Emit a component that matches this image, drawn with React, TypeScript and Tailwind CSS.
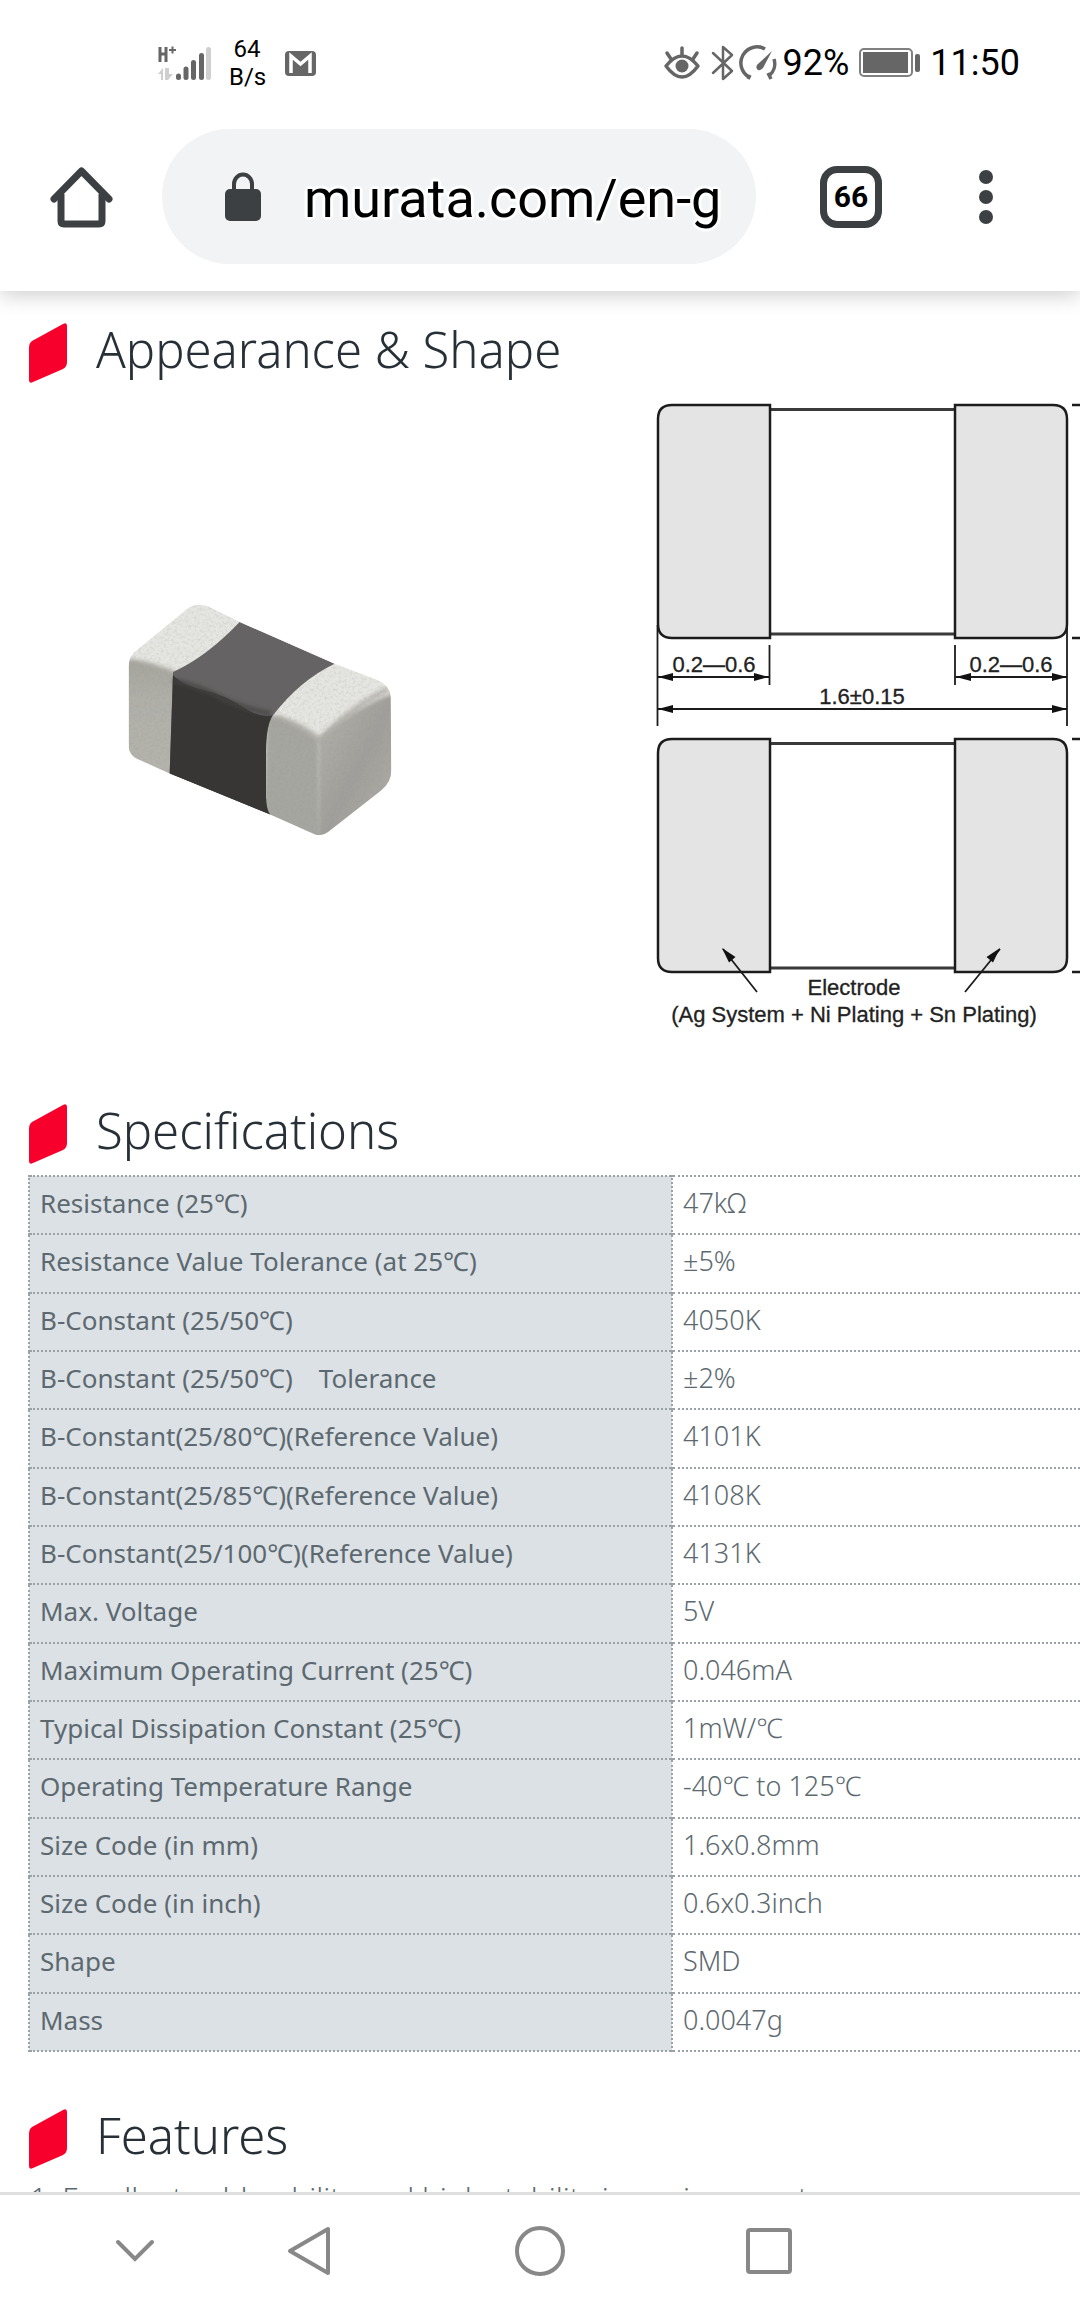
import type { ReactNode } from 'react';

interface Spec {
  label: string;
  value: string;
}

const specs: Spec[] = [
  { label: 'Resistance (25℃)', value: '47kΩ' },
  { label: 'Resistance Value Tolerance (at 25℃)', value: '±5%' },
  { label: 'B-Constant (25/50℃)', value: '4050K' },
  { label: 'B-Constant (25/50℃)　Tolerance', value: '±2%' },
  { label: 'B-Constant(25/80℃)(Reference Value)', value: '4101K' },
  { label: 'B-Constant(25/85℃)(Reference Value)', value: '4108K' },
  { label: 'B-Constant(25/100℃)(Reference Value)', value: '4131K' },
  { label: 'Max. Voltage', value: '5V' },
  { label: 'Maximum Operating Current (25℃)', value: '0.046mA' },
  { label: 'Typical Dissipation Constant (25℃)', value: '1mW/℃' },
  { label: 'Operating Temperature Range', value: '-40℃ to 125℃' },
  { label: 'Size Code (in mm)', value: '1.6x0.8mm' },
  { label: 'Size Code (in inch)', value: '0.6x0.3inch' },
  { label: 'Shape', value: 'SMD' },
  { label: 'Mass', value: '0.0047g' },
];

function StatusBar() {
  return (
    <div className="flex h-[129px] items-center justify-between pb-[3px] pl-[157px] pr-15 font-['Roboto',sans-serif] text-black">
      <div className="flex items-center">
        <svg width="56" height="36" viewBox="0 0 56 36">
          {/* H+ network type */}
          <path d="M3 2v15M9 2v15M3 9h6" stroke="#666" strokeWidth="3" fill="none" />
          <path d="M12 5h7M15.500 1.500v7" stroke="#666" strokeWidth="2" />
          {/* Data arrows */}
          <path d="M6 35V23L1 29h3v6zM8 23v12h3l5-6h-4v-6z" fill="#cfcfcf" />
          {/* Signal bars */}
          <g strokeWidth="5" strokeLinecap="round" stroke="#666">
            <path d="M21.500 31v1.500M29 24v8.500M36.500 17.500v15M44.500 10.500v22" />
            <path d="M51.500 4.500v28" stroke="#cfcfcf" />
          </g>
        </svg>
        <div className="ml-4 w-9 text-center text-2xl leading-7">
          64
          <br />
          B/s
        </div>
        <svg className="ml-5" width="31" height="25" viewBox="0 0 31 25">
          <rect width="31" height="25" rx="4" fill="#666" />
          <path d="M6 22V5l9.500 8L25 5v17" fill="none" stroke="#fff" strokeWidth="3.500" />
        </svg>
      </div>
      <div className="flex items-center text-4xl">
        {/* Eye comfort */}
        <svg width="38" height="36" viewBox="0 0 38 36" fill="none" stroke="#666" strokeWidth="3.500" strokeLinecap="round">
          <path d="M3 21Q11 11 19 11T35 21Q27 32 19 32T3 21Z" strokeLinejoin="round" />
          <circle cx="19" cy="21" r="6.500" fill="#666" stroke="none" />
          <path d="M19 3v7M4 8l4 6M34 8l-4 6" />
        </svg>
        {/* Bluetooth */}
        <svg className="ml-2" width="26" height="36" viewBox="0 0 26 36" fill="none" stroke="#666" strokeWidth="2.500" strokeLinecap="round" strokeLinejoin="round">
          <path d="M4 8l19 18-9 8V2l9 8L4 28" />
        </svg>
        {/* Data saver gauge */}
        <svg className="ml-1" width="40" height="36" viewBox="0 0 40 36" fill="none" stroke="#666" strokeWidth="3.500">
          <path d="M11 30l-2 4M10 32A16 16 0 0 1 26 4M35 14A16 16 0 0 1 30 31M29 28l3 6" />
          <path d="M33 6L24 23q-4 4-6 1t2-6z" fill="#666" stroke="none" />
        </svg>
        <span className="ml-1">92%</span>
        <svg className="mx-[10px]" width="61" height="30" viewBox="0 0 61 30">
          <rect x="1" y="1" width="52" height="27" rx="4" fill="none" stroke="#808080" strokeWidth="2" />
          <rect x="4" y="4" width="45" height="21" fill="#666" />
          <rect x="56" y="6" width="5" height="18" rx="2" fill="#666" />
        </svg>
        <span>11:50</span>
      </div>
    </div>
  );
}

function Toolbar() {
  return (
    <div className="flex items-center pb-[27px] pl-[49px] pr-[86px] text-[#3c4043]">
      <button type="button" aria-label="Home">
        <svg width="64" height="64" viewBox="0 0 64 64" fill="none" stroke="currentColor">
          <path d="M5 34L32.500 6 60 34" strokeWidth="7" strokeLinecap="round" strokeLinejoin="round" />
          <path d="M12 29v27q0 3 3 3h35q3 0 3-3V29" strokeWidth="7" />
        </svg>
      </button>
      <div className="ml-[49px] flex h-[135px] flex-1 items-center rounded-full bg-[#f1f3f4] pl-[62px] pr-8">
        <svg width="38" height="50" viewBox="0 0 38 50">
          <rect x="1" y="17" width="36" height="32" rx="5" fill="currentColor" />
          <path d="M10 20V12a9 9.500 0 0 1 18 0v8" fill="none" stroke="currentColor" strokeWidth="4" />
        </svg>
        <input
          type="text"
          aria-label="Address"
          defaultValue="murata.com/en-g"
          className="ml-[42px] w-0 flex-1 bg-transparent pt-1 font-['Roboto',sans-serif] text-[54px] leading-[72px] text-black outline-none [text-shadow:3px_0_1px_#fff,-3px_0_1px_#fff,0_3px_1px_#fff,0_-3px_1px_#fff,2px_2px_1px_#fff,-2px_2px_1px_#fff,2px_-2px_1px_#fff,-2px_-2px_1px_#fff]"
        />
      </div>
      <button
        type="button"
        aria-label="Open tabs"
        className="ml-16 flex h-[62px] w-[62px] items-center justify-center rounded-[17px] border-[7px] border-[#3c4043] font-['Roboto',sans-serif] text-[30px] font-bold text-black"
      >
        66
      </button>
      <button type="button" aria-label="Menu" className="ml-24">
        <svg width="16" height="62" viewBox="0 0 16 62" fill="currentColor">
          <circle cx="8" cy="11" r="7" />
          <circle cx="8" cy="31" r="7" />
          <circle cx="8" cy="51" r="7" />
        </svg>
      </button>
    </div>
  );
}

function SectionHeading({ children }: { children: ReactNode }) {
  return (
    <h2 className="flex h-[60px] items-start gap-7 text-[49px] leading-[52px] font-light text-[#273036]">
      <svg className="shrink-0" width="40" height="60" viewBox="0 0 40 60">
        <path d="M4 18L35 1q4-2 4 2v36q0 5-4 7L5 59q-4 2-4-2V25q0-5 3-7z" fill="#f8002c" />
      </svg>
      <span>{children}</span>
    </h2>
  );
}

function ChipPhoto() {
  return (
    <svg className="mt-3 shrink-0" width="266" height="236" viewBox="82 68 798 708" role="img" aria-label="Chip">
      <defs>
        <clipPath id="chip">
          <path d="M300 73Q280 72 262 86L105 215Q87 232 87 260V500Q90 525 112 535L212 580 510 702 645 762Q665 770 685 755L845 630Q875 605 875 570L873 350Q870 315 835 300L705 250 420 125 325 78Q312 73 300 73Z" />
        </clipPath>
        <linearGradient id="leftSide" x1="0" y1="0" x2="0" y2="1">
          <stop offset="0" stopColor="#a5a49d" />
          <stop offset="0.35" stopColor="#b0b0a9" />
          <stop offset="1" stopColor="#b5b4ad" />
        </linearGradient>
        <linearGradient id="endFace" x1="0" y1="0" x2="1" y2="1">
          <stop offset="0" stopColor="#b4b3ad" />
          <stop offset="0.5" stopColor="#a09f9a" />
          <stop offset="1" stopColor="#b3b1aa" />
        </linearGradient>
        <filter id="soft" x="-10%" y="-10%" width="120%" height="120%">
          <feGaussianBlur stdDeviation="7" />
        </filter>
        <filter id="grain" x="0" y="0" width="100%" height="100%">
          <feTurbulence type="fractalNoise" baseFrequency="0.12" numOctaves="2" />
          <feColorMatrix values="0 0 0 0 0.3  0 0 0 0 0.3  0 0 0 0 0.28  1.6 0 0 0 -0.7" />
        </filter>
      </defs>
      <g clipPath="url(#chip)">
        <rect x="80" y="60" width="800" height="720" fill="#e5e5e1" />
        {/* Left electrode side */}
        <path d="M60 235Q120 232 230 275V600L60 560Z" fill="url(#leftSide)" filter="url(#soft)" />
        {/* Right electrode front and end faces */}
        <path d="M500 400Q590 425 658 480L662 790 490 720Z" fill="#a6a6a1" filter="url(#soft)" />
        <path d="M655 482Q760 380 890 335V800H655Z" fill="url(#endFace)" filter="url(#soft)" />
        <path d="M525 410Q600 430 660 478 760 375 868 325" fill="none" stroke="#a19e96" strokeWidth="12" opacity="0.8" filter="url(#soft)" />
        <path d="M660 490V760" stroke="#b6b5af" strokeWidth="14" filter="url(#soft)" />
        <rect x="80" y="60" width="800" height="720" filter="url(#grain)" opacity="0.3" />
        {/* Ceramic body */}
        <path d="M420 125L705 250Q600 300 520 405 498 440 499 520V650Q500 690 512 704L210 580 220 275Q320 230 420 125Z" fill="#656363" />
        <path d="M220 283Q240 310 310 328T430 380 518 405Q498 440 499 520V650Q500 690 512 704L210 580Z" fill="#383634" />
        <path d="M222 300Q300 318 360 350T512 400" fill="none" stroke="#454342" strokeWidth="12" filter="url(#soft)" />
      </g>
    </svg>
  );
}

function ChipOutline({ y }: { y: number }) {
  return (
    <g transform={`translate(0 ${y})`} stroke="#1c1c1c" strokeWidth="2.500">
      <path d="M129 4.500H315M129 229H315" fill="none" stroke="#3a3a3a" strokeWidth="3" />
      <path d="M130 0H32Q18 0 18 14V219Q18 233 32 233H130Z" fill="#e4e4e4" />
      <path d="M315 0H413Q427 0 427 14V219Q427 233 413 233H315Z" fill="#e4e4e4" />
      <path d="M432 0h8M432 233h8" />
    </g>
  );
}

function DimensionDrawing() {
  return (
    <svg className="shrink-0" width="440" height="650" viewBox="0 0 440 650" role="img" aria-label="Dimensions">
      <ChipOutline y={15} />
      <ChipOutline y={349} />
      <g stroke="#1c1c1c" strokeWidth="1.800" fill="none">
        <path d="M17.500 235V336M427 235V336M129.500 255V295M315 255V295" />
        <path d="M18 287H129M315.500 287H427M18 319H427" />
        <path d="M117 602L83 559M325 602L360 559" />
      </g>
      {/* Arrow heads */}
      <g fill="#111">
        <path d="M18 287l15-4v8zM129 287l-15-4v8zM316 287l15-4v8zM427 287l-15-4v8z" />
        <path d="M18 319l15-4v8zM427 319l-15-4v8z" />
        <path d="M82 558l13.500 9-6.500 5.500zM360 558l-13.500 9 6.500 5.500z" />
      </g>
      <g className="font-['Liberation_Sans',Arial,sans-serif] text-[22px]" fill="#222" stroke="#222" strokeWidth="0.300" textAnchor="middle">
        <text x="74" y="282">0.2—0.6</text>
        <text x="371" y="282">0.2—0.6</text>
        <text x="222" y="314">1.6±0.15</text>
        <text x="214" y="605">Electrode</text>
        <text x="214" y="632">(Ag System + Ni Plating + Sn Plating)</text>
      </g>
    </svg>
  );
}

function SpecTable() {
  return (
    <table className="mt-[11px] h-[877px] w-full border-collapse text-left text-[26px] leading-9 text-[#5d6970]">
      <tbody>
        {specs.map((spec) => (
          <tr key={spec.label} className="border-y-2 border-dotted border-[#9aa2a7]">
            <th scope="row" className="w-[643px] border-x-2 border-dotted border-[#9aa2a7] bg-[#dce1e5] px-[10px] pb-1 font-normal">
              {spec.label}
            </th>
            <td className="px-[10px] pb-1 text-[27px] font-light">{spec.value}</td>
          </tr>
        ))}
      </tbody>
    </table>
  );
}

function NavBar() {
  return (
    <nav className="grid h-[118px] shrink-0 grid-cols-[174fr_174fr_288fr_170fr_226fr] border-t-3 border-[#dfdfdf] bg-white pb-[3px] pl-12">
      <button type="button" aria-label="Hide navigation" className="flex items-center justify-center">
        <svg width="42" height="26" viewBox="0 0 42 26" fill="none" stroke="#888" strokeWidth="4" strokeLinecap="round">
          <path d="M4 4l17 17L38 4" />
        </svg>
      </button>
      <button type="button" aria-label="Back" className="flex items-center justify-center">
        <svg width="46" height="52" viewBox="0 0 46 52" fill="none" stroke="#888" strokeWidth="4" strokeLinejoin="round">
          <path d="M42 4v44L4 26z" />
        </svg>
      </button>
      <button type="button" aria-label="Home screen" className="flex items-center justify-center">
        <svg width="50" height="50" viewBox="0 0 50 50" fill="none" stroke="#888" strokeWidth="4">
          <circle cx="25" cy="25" r="23" />
        </svg>
      </button>
      <button type="button" aria-label="Recent apps" className="flex items-center justify-center">
        <svg width="46" height="46" viewBox="0 0 46 46" fill="none" stroke="#888" strokeWidth="4">
          <rect x="2" y="2" width="42" height="42" rx="2" />
        </svg>
      </button>
    </nav>
  );
}

export default function App() {
  return (
    <div className="flex h-screen flex-col overflow-hidden bg-white">
      <header className="relative z-10 shrink-0 bg-white shadow-[0_4px_20px_rgba(0,0,0,0.2)]">
        <StatusBar />
        <Toolbar />
      </header>

      <main className="min-h-0 flex-1 overflow-hidden pl-7 pt-8 font-['Noto_Sans','Noto_Sans_CJK_JP',sans-serif]">
        <section>
          <SectionHeading>Appearance &amp; Shape</SectionHeading>
          <div className="mt-[7px] mb-16 flex items-center justify-between pl-[99px]">
            <ChipPhoto />
            <DimensionDrawing />
          </div>
        </section>

        <section>
          <SectionHeading>Specifications</SectionHeading>
          <SpecTable />
        </section>

        <section className="mt-[57px]">
          <SectionHeading>Features</SectionHeading>
          <p className="mt-[11px] pl-[2px] text-[30px] leading-9 font-light whitespace-nowrap text-[#5d6970]">
            1. Excellent solderability and high stability in environment
          </p>
        </section>
      </main>

      <NavBar />
    </div>
  );
}
